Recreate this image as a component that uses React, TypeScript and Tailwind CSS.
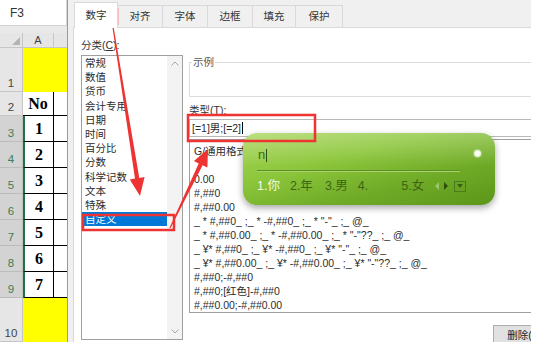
import React from 'react';

const categories = ['常规', '数值', '货币', '会计专用', '日期', '时间', '百分比', '分数', '科学记数', '文本', '特殊', '自定义'];

const formats = [
  'G/通用格式',
  '',
  '0.00',
  '#,##0',
  '#,##0.00',
  '_ * #,##0_ ;_ * -#,##0_ ;_ * "-"_ ;_ @_',
  '_ * #,##0.00_ ;_ * -#,##0.00_ ;_ * "-"??_ ;_ @_',
  '_ ¥* #,##0_ ;_ ¥* -#,##0_ ;_ ¥* "-"_ ;_ @_',
  '_ ¥* #,##0.00_ ;_ ¥* -#,##0.00_ ;_ ¥* "-"??_ ;_ @_',
  '#,##0;-#,##0',
  '#,##0;[红色]-#,##0',
  '#,##0.00;-#,##0.00',
];

const tabs = [
  { label: '数字', w: 'w-[44px]' },
  { label: '对齐', w: 'w-[45px]' },
  { label: '字体', w: 'w-[45px]' },
  { label: '边框', w: 'w-[45px]' },
  { label: '填充', w: 'w-[43px]' },
  { label: '保护', w: 'w-[47px]' },
];

type Row = { n: string; h: string; value?: string; yellow?: boolean; selected?: boolean };

const rows: Row[] = [
  { n: '1', h: 'h-[44px]', yellow: true },
  { n: '2', h: 'h-[24px]', value: 'No' },
  { n: '3', h: 'h-[26px]', value: '1', selected: true },
  { n: '4', h: 'h-[26px]', value: '2', selected: true },
  { n: '5', h: 'h-[26px]', value: '3', selected: true },
  { n: '6', h: 'h-[26px]', value: '4', selected: true },
  { n: '7', h: 'h-[26px]', value: '5', selected: true },
  { n: '8', h: 'h-[26px]', value: '6', selected: true },
  { n: '9', h: 'h-[26px]', value: '7', selected: true },
  { n: '10', h: 'h-[44px]', yellow: true },
];

function Sheet() {
  return (
    <div className="flex w-[67px] shrink-0 flex-col bg-[#e9e9e9]">
      {/* Name box */}
      <div className="flex h-[26px] items-center border-b border-r border-[#d4d4d4] bg-white pl-[10px] text-[12px] text-[#333]">
        F3
      </div>
      <div className="h-[7px]" />

      {/* Column header */}
      <div className="flex h-[15px] border-b border-[#c6c6c6] bg-[#e6e6e6]">
        <div className="flex w-[23px] items-end justify-end border-r border-[#c6c6c6] p-[2px]">
          <svg width="8" height="8" viewBox="0 0 8 8">
            <polygon points="8,0 8,8 0,8" fill="#b4b4b4" />
          </svg>
        </div>
        <div className="flex w-[31px] items-center justify-center border-r border-[#c6c6c6] text-[11px] text-[#444]">
          A
        </div>
        <div className="flex-1" />
      </div>

      {rows.map((r) => (
        <div key={r.n} className={`flex ${r.h}`}>
          <div
            className={`flex w-[23px] items-end justify-center border-b border-r pb-[1px] text-[11.5px] leading-[13px] ${
              r.selected
                ? 'border-[#bcbcbc] bg-[#d3d3d3] text-[#3f7d55]'
                : 'border-[#c6c6c6] bg-[#e6e6e6] text-[#444]'
            }`}
          >
            {r.n}
          </div>
          {r.yellow ? (
            <div className="flex-1 bg-[#ffff00]" />
          ) : (
            <>
              <div
                className={`flex w-[31px] items-center justify-center border-b border-r border-black bg-white font-['Liberation_Serif',serif] text-[16px] font-bold text-black ${
                  r.selected ? 'border-l-2 border-l-[#217346]' : ''
                }`}
              >
                {r.value}
              </div>
              <div className="flex-1 border-b border-black bg-white" />
            </>
          )}
        </div>
      ))}
    </div>
  );
}

function Dialog() {
  return (
    <div className="flex h-[342px] w-[464px] shrink-0 flex-col overflow-hidden border-l border-[#9a9a9a] bg-[#f0f0f0] text-[10.5px] text-[#333]">
      {/* Tabs */}
      <div className="flex h-[27px] shrink-0 items-end pl-[6px]">
        {tabs.map((t, i) =>
          i === 0 ? (
            <div
              key={t.label}
              className={`relative z-10 -mb-px flex h-[26px] ${t.w} items-center justify-center border border-b-0 border-[#d9d9d9] bg-white`}
            >
              {t.label}
            </div>
          ) : (
            <div
              key={t.label}
              className={`flex h-[22px] ${t.w} items-center justify-center border border-b-0 border-l-0 border-[#d9d9d9] bg-[#f0f0f0]`}
            >
              {t.label}
            </div>
          )
        )}
      </div>

      {/* Panel */}
      <div className="ml-[5px] flex h-[330px] w-[480px] shrink-0 border border-[#d9d9d9] bg-white">
        {/* Category */}
        <div className="flex flex-col pl-[7px] pt-[11px]">
          <div className="leading-[12px]">
            分类(<span className="underline">C</span>):
          </div>
          <div className="mt-[4px] flex h-[285px] w-[102px] border border-[#a0a0a0] bg-white">
            <div className="flex-1 pt-0">
              {categories.map((c) => (
                <div
                  key={c}
                  className={`px-[3px] leading-[14.2px] ${c === '自定义' ? 'bg-[#0078d7] text-white' : 'text-[#2b2b2b]'}`}
                >
                  {c}
                </div>
              ))}
            </div>
            <div className="flex w-[15px] flex-col items-center justify-between bg-[#f3f3f3] py-[5px]">
              <svg width="8" height="5" viewBox="0 0 8 5">
                <path d="M0.5 4.5 L4 1 L7.5 4.5" fill="none" stroke="#a6a6a6" strokeWidth="1" />
              </svg>
              <svg width="8" height="5" viewBox="0 0 8 5">
                <path d="M0.5 0.5 L4 4 L7.5 0.5" fill="none" stroke="#a6a6a6" strokeWidth="1" />
              </svg>
            </div>
          </div>
        </div>

        {/* Sample + type */}
        <div className="ml-[6px] flex w-[360px] shrink-0 flex-col pt-[28px]">
          <fieldset className="h-[41px] border border-[#dcdcdc] px-[2px]">
            <legend className="px-[1px] leading-[12px] text-[#555]">示例</legend>
          </fieldset>
          <div className="mt-[7px] leading-[12px]">
            类型(<span className="underline">T</span>):
          </div>
          <div className="mt-[3px] flex h-[18px] items-center border border-[#b9b9b9] pl-[2px] leading-[14px] text-[#2b2b2b]">
            [=1]男;[=2]
            <span className="ml-px h-[12px] w-px bg-black" />
          </div>
          <div className="mt-[2px] h-[174px] border border-[#a0a0a0] pl-[4px] pt-[4px] text-[#2b2b2b]">
            {formats.map((f, i) => (
              <div key={i} className="h-[14px] whitespace-pre leading-[14px]">
                {f}
              </div>
            ))}
          </div>
          <div className="ml-[304px] mt-[12px] flex h-[22px] w-[64px] items-center justify-center border border-[#adadad] bg-[#e1e1e1] text-[#222]">
            删除(<span className="underline">D</span>)
          </div>
        </div>
      </div>
    </div>
  );
}

function ImePopup() {
  return (
    <div className="absolute left-[243px] top-[133px] flex h-[72px] w-[252px] flex-col rounded-[14px] bg-[linear-gradient(to_bottom,rgba(255,255,255,0.22),rgba(255,255,255,0)_45%),linear-gradient(165deg,#a9d65c_0%,#8dc73c_35%,#6ea926_70%,#5b961a_100%)] px-[14px] pt-[13px] shadow-[0_3px_7px_rgba(0,0,0,0.35)]">
      <div className="flex h-[18px] items-center justify-between">
        <div className="flex items-center text-[13px] leading-[18px] text-[#41671a]">
          <span className="pl-px">n</span>
          <span className="ml-px h-[13px] w-px bg-[#2e4d10]" />
        </div>
        <div className="mb-[3px] h-[7px] w-[7px] rounded-full border border-[#e8f5d6] bg-[#fafff2] shadow-[0_0_2px_rgba(255,255,255,0.9)]" />
      </div>
      <div className="mt-[6px] h-px w-[203px] bg-[#5d8d26]" />
      <div className="h-px w-[203px] bg-[#a9d46c]" />
      <div className="mt-[5px] flex h-[18px] items-center text-[12.5px] leading-[18px] text-[#3d6512]">
        <span className="text-[#f2fae6]">1.你</span>
        <span className="ml-[10px]">2.年</span>
        <span className="ml-[12px]">3.男</span>
        <span className="ml-[10px]">4.</span>
        <span className="ml-[33px]">5.女</span>
        <svg className="ml-[10px]" width="16" height="10" viewBox="0 0 16 10">
          <polygon points="5,1 5,9 1,5" fill="#9cc46a" />
          <polygon points="10,1 10,9 14,5" fill="#2f4f0c" />
        </svg>
        <div className="ml-[4px] flex h-[11px] w-[12px] items-center justify-center border border-[#4d7a1d]">
          <svg width="6" height="4" viewBox="0 0 6 4">
            <polygon points="0,0 6,0 3,4" fill="#3a600f" />
          </svg>
        </div>
      </div>
    </div>
  );
}

function Annotations() {
  return (
    <svg className="pointer-events-none absolute left-0 top-0" width="554" height="352" viewBox="0 0 554 352">
      <rect x="84" y="9" width="33" height="15" fill="none" stroke="#ee3333" strokeWidth="2.5" />
      <rect x="83" y="215" width="91" height="15" fill="none" stroke="#ee3333" strokeWidth="2.5" />
      <rect x="188" y="115" width="127" height="26" fill="none" stroke="#ee3333" strokeWidth="2.5" />
      <polygon
        points="113.6,26.9 139.3,177.9 144.6,177.0 140,196 129.8,179.4 135.0,178.6 112.4,27.1"
        fill="#ee3333"
      />
      <polygon
        points="170.5,228.3 202.6,165.3 207.4,167.6 208,149 193.9,161.1 198.7,163.4 169.5,227.7"
        fill="#ee3333"
      />
    </svg>
  );
}

export default function App() {
  return (
    <div className="relative h-[352px] w-[554px] overflow-hidden bg-white font-['Liberation_Sans','Noto_Sans_CJK_SC',sans-serif]">
      <div className="flex h-[342px] w-[531px]">
        <Sheet />
        <Dialog />
      </div>
      <ImePopup />
      <Annotations />
    </div>
  );
}
